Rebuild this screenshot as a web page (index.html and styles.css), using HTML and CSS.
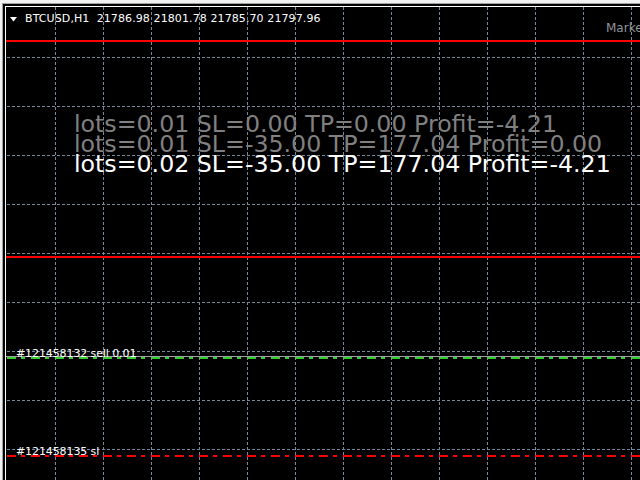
FILE: index.html
```html
<!DOCTYPE html>
<html>
<head>
<meta charset="utf-8">
<title>BTCUSD,H1</title>
<link rel="stylesheet" href="styles.css">
</head>
<body>
<div class="frame">
  <div class="chart">
    <svg class="plot" viewBox="6 7 634 473" width="634" height="473">
      <g class="grid">
        <line x1="55.5" y1="7" x2="55.5" y2="480"/>
        <line x1="103.5" y1="7" x2="103.5" y2="480"/>
        <line x1="151.5" y1="7" x2="151.5" y2="480"/>
        <line x1="199.5" y1="7" x2="199.5" y2="480"/>
        <line x1="247.5" y1="7" x2="247.5" y2="480"/>
        <line x1="295.5" y1="7" x2="295.5" y2="480"/>
        <line x1="343.5" y1="7" x2="343.5" y2="480"/>
        <line x1="391.5" y1="7" x2="391.5" y2="480"/>
        <line x1="439.5" y1="7" x2="439.5" y2="480"/>
        <line x1="487.5" y1="7" x2="487.5" y2="480"/>
        <line x1="535.5" y1="7" x2="535.5" y2="480"/>
        <line x1="583.5" y1="7" x2="583.5" y2="480"/>
        <line x1="631.5" y1="7" x2="631.5" y2="480"/>
        <line x1="7" y1="57.5" x2="640" y2="57.5"/>
        <line x1="7" y1="106.5" x2="640" y2="106.5"/>
        <line x1="7" y1="155.5" x2="640" y2="155.5"/>
        <line x1="7" y1="204.5" x2="640" y2="204.5"/>
        <line x1="7" y1="253.5" x2="640" y2="253.5"/>
        <line x1="7" y1="302.5" x2="640" y2="302.5"/>
        <line x1="7" y1="351.5" x2="640" y2="351.5"/>
        <line x1="7" y1="400.5" x2="640" y2="400.5"/>
        <line x1="7" y1="449.5" x2="640" y2="449.5"/>
      </g>
      <line class="level" x1="6" y1="41" x2="640" y2="41"/>
      <line class="level" x1="6" y1="257" x2="640" y2="257"/>
      <line class="order-price" x1="6" y1="356.5" x2="640" y2="356.5"/>
      <line class="order-open" x1="7" y1="358" x2="640" y2="358"/>
      <line class="order-sl" x1="7" y1="456" x2="640" y2="456"/>
    </svg>

    <div class="header">
      <svg class="menu-tri" width="7" height="5" viewBox="0 0 7 5"><polygon points="0,0 7,0 3.5,4.5" fill="#fff"/></svg>
      <span class="title">BTCUSD,H1&nbsp; 21786.98 21801.78 21785.70 21797.96</span>
    </div>

    <div class="status">Market closed</div>

    <div class="comment">
      <div class="c-line dim">lots=0.01 SL=0.00 TP=0.00 Profit=-4.21</div>
      <div class="c-line dim">lots=0.01 SL=-35.00 TP=177.04 Profit=0.00</div>
      <div class="c-line bright">lots=0.02 SL=-35.00 TP=177.04 Profit=-4.21</div>
    </div>

    <div class="tag tag-open">#121458132 sell 0.01</div>
    <div class="tag tag-sl">#121458135 sl</div>
  </div>
</div>
</body>
</html>
```

FILE: styles.css
```css
html, body {
  margin: 0;
  padding: 0;
  height: 100%;
  overflow: hidden;
}

body {
  background: #f0f0f0;
  display: flex;
  flex-direction: column;
  font-family: "DejaVu Sans", Verdana, sans-serif;
}

.frame {
  flex: 1;
  display: flex;
  flex-direction: column;
  margin: 3px 0 0 2px;
  border-top: 1px solid #a0a0a0;
  border-left: 1px solid #a0a0a0;
  padding: 2px 0 0 2px;
  background: #000;
  min-height: 0;
}

.chart {
  flex: 1;
  position: relative;
  background: #000;
  border-top: 1px solid #fff;
  border-left: 1px solid #fff;
  overflow: hidden;
}

.plot {
  position: absolute;
  top: 0;
  left: 0;
  display: block;
}

.grid line {
  stroke: #778899;
  stroke-width: 1;
  stroke-dasharray: 3 2;
  shape-rendering: crispEdges;
}

.level {
  stroke: #ff0000;
  stroke-width: 2;
  shape-rendering: crispEdges;
}

.order-price {
  stroke: #a0a0a0;
  stroke-width: 1;
  shape-rendering: crispEdges;
}

.order-open {
  stroke: #32cd32;
  stroke-width: 2;
  stroke-dasharray: 9 5 4 6;
  shape-rendering: crispEdges;
}

.order-sl {
  stroke: #ff0000;
  stroke-width: 2;
  stroke-dasharray: 9 5 4 6;
  shape-rendering: crispEdges;
}

.header {
  position: relative;
  display: flex;
  align-items: center;
  gap: 8px;
  padding: 5px 0 0 4px;
  height: 13px;
}

.menu-tri {
  display: block;
  margin-top: 1px;
}

.title {
  color: #fff;
  font-size: 11px;
  line-height: 13px;
  letter-spacing: 0.1px;
  white-space: pre;
}

.status {
  position: absolute;
  top: 14px;
  left: 600px;
  color: #8e959c;
  font-size: 12px;
  line-height: 14px;
  white-space: nowrap;
}

.comment {
  position: absolute;
  top: 107px;
  left: 68px;
  font-size: 23.7px;
  line-height: 20px;
  white-space: nowrap;
}

.dim {
  color: #808080;
}

.bright {
  color: #ffffff;
}

.tag {
  position: absolute;
  left: 10px;
  color: #fff;
  font-size: 11px;
  line-height: 13px;
  letter-spacing: -0.1px;
  white-space: nowrap;
}

.tag-open {
  top: 340px;
}

.tag-sl {
  top: 438px;
}
```
